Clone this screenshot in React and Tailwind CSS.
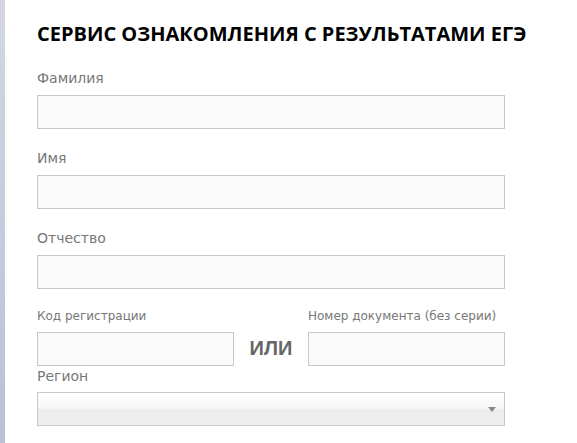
const Field = ({ label }) => (
  <div className="mb-[19px]">
    <label className="block text-[14px] leading-[20px] text-[#777]">{label}</label>
    <input
      type="text"
      className="mt-[7px] block h-[34px] w-full border border-[#c8c8c8] bg-[#fafafa] outline-none"
    />
  </div>
);

const SmallField = ({ label }) => (
  <div className="w-[197px]">
    <label className="block text-[12px] leading-[16px] text-[#777] whitespace-nowrap">{label}</label>
    <input
      type="text"
      className="mt-[8px] block h-[34px] w-full border border-[#c8c8c8] bg-[#fafafa] outline-none"
    />
  </div>
);

export default function App() {
  return (
    <div className="flex min-h-[443px] bg-white font-['DejaVu_Sans',sans-serif]">
      <div className="w-[5px] shrink-0 bg-gradient-to-b from-[#d3d6e2] to-[#bcc0d6]" />
      <div className="w-[468px] pl-[32px] box-content">
        <h1 className="mt-[20px] mb-[20px] whitespace-nowrap font-['Open_Sans',sans-serif] text-[20px] font-bold leading-[28px] text-black">
          СЕРВИС ОЗНАКОМЛЕНИЯ С РЕЗУЛЬТАТАМИ ЕГЭ
        </h1>

        <Field label="Фамилия" />
        <Field label="Имя" />
        <Field label="Отчество" />

        <div className="flex items-end justify-between">
          <SmallField label="Код регистрации" />
          <span className="mb-[8px] font-['Liberation_Sans',sans-serif] text-[20px] font-bold leading-[20px] text-[#666]">
            ИЛИ
          </span>
          <SmallField label="Номер документа (без серии)" />
        </div>

        <label className="block text-[14px] leading-[20px] text-[#777]">Регион</label>
        <div className="relative mt-[6px] h-[34px] w-full border border-[#c8c8c8] bg-[linear-gradient(#ffffff_0%,#f6f6f6_48%,#ececec_52%,#efefef_100%)]">
          <span className="absolute right-[8px] top-[14px] h-0 w-0 border-x-[4px] border-t-[5px] border-x-transparent border-t-[#888]" />
        </div>
      </div>
    </div>
  );
}
